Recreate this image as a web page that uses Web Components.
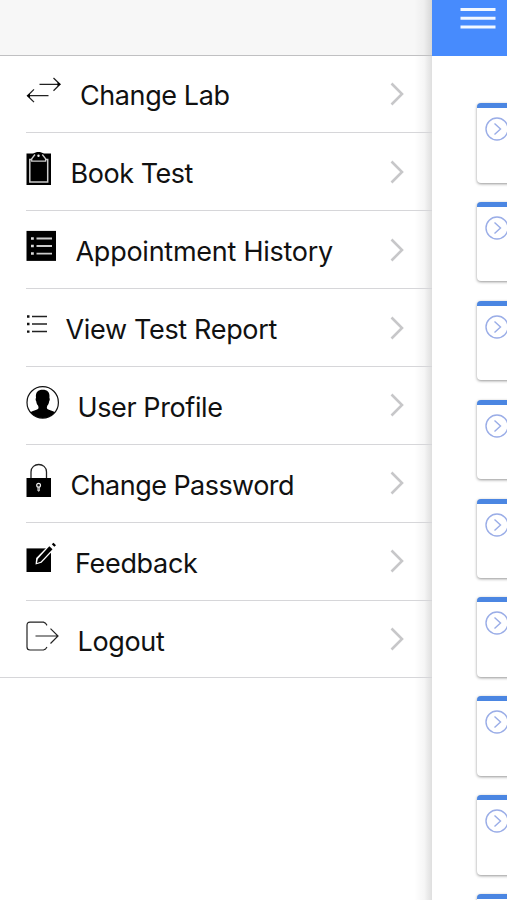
<!DOCTYPE html>
<html lang="en"><head><meta charset="utf-8"><title>Menu</title>
<style>html,body{margin:0;height:900px;overflow:hidden;background:#fff}</style></head>
<body><app-shell></app-shell>
<script>
const icons = {
  swap: [34, `<g fill="none" stroke="#222" stroke-width="1.3"><path d="M13.5 10.3H34M27.5 4l6.5 6.3-6.5 6.4M22.500 21.700H1.500M8 15.400l-6.500 6.300 6.500 6.400"/></g><path d="M31.500 8l3.300 2.300-3.300 2.300zM4 19.400l-3.300 2.300 3.300 2.300z"/>`],
  clipboard: [25, `<path d="M.5 1.500H7L11 0h3l4 1.500h7v31.500H.5z"/><path d="M5.500 7.500H3.800v22.500h17.900V7.500h-1.700" fill="none" stroke="#ccc" stroke-width="1.500"/><path d="M9 2.500L5.700 6.800v2.400h13.900V6.800L16.300 2.500" fill="none" stroke="#ccc" stroke-width="1.300"/><path d="M7 7.600c1-2.600 3-1.800 3.400-4.500.4-3.900 3.900-3.900 4.300 0 .4 2.700 2.400 1.900 3.400 4.500z"/><circle cx="12.500" cy="3.700" r="1.200" fill="#eee"/>`],
  listbox: [30, `<path d="M.5.9H30v30H.5z"/><path d="M10.500 8.500H26M10.500 16H26M10.500 23.600H26" stroke="#ccc" stroke-width="1.800"/><path d="M5 8.500h2.800M5 16h2.800M5 23.600h2.800" stroke="#ddd" stroke-width="2.500"/>`],
  list: [21, `<path d="M6 8.500h15M6 16h15M6 23.600h15" stroke="#222" stroke-width="1.500"/><path d="M1 8.500h2.500M1 16h2.500M1 23.600h2.500" stroke="#111" stroke-width="2.300"/>`],
  user: [32, `<circle cx="16.700" cy="16.400" r="15.700" fill="#fff" stroke="#111" stroke-width="1.200"/><path d="M4.500 26.300c2-1.600 6-1.800 7.500-3.200.9-.9.500-2.300 0-3.500-1-1.300-1.500-2.600-1.700-4.200-.8-1-.9-2.600-.3-3.700-.7-5.400 2-7.900 6.700-7.900s7.400 2.500 6.700 7.900c.6 1.100.5 2.700-.3 3.700-.2 1.600-.7 2.900-1.700 4.200-.5 1.200-.9 2.600 0 3.500 1.500 1.400 5.500 1.600 7.500 3.200A15.700 15.700 0 0 1 4.500 26.300z"/>`],
  lock: [25, `<path d="M5 15V8c0-10 15.500-10 15.500 0v7" fill="none" stroke="#222" stroke-width="1.300"/><path d="M.5 14H25v19H.5z"/><path d="M12 23v4h1.200v-4" fill="none" stroke="#eee" stroke-width="1"/><circle cx="12.600" cy="21.300" r="1.900" fill="#111" stroke="#eee" stroke-width="1.200"/>`],
  edit: [30, `<path d="M.5 6.400H25V30H.5z"/><path d="M9.500 22.500l.7-6.500L23.500 2.500l5 4.500L15.500 20.800z" fill="#fff"/><path d="M11 20.900l.8-3.900L23.300 4.300l3.200 3-11.800 12.500z"/><path d="M25.800 2.200L27.500.8 30 3.200l-1.700 1.600z"/>`],
  logout: [32, `<path d="M21 5.300l-1.500-2.100-2-1H4Q1 2.200 1 5.200V27q0 3 3 3h13.500l2-1 1.500-2M9.500 16H32M24.500 8.600L32 16l-7.500 7.500" fill="none" stroke="#222" stroke-width="1.200"/>`]
};
function define(name, html, setup) {
  customElements.define(name, class extends HTMLElement {
    connectedCallback() {
      if (this.shadowRoot) return;
      this.attachShadow({mode:'open'}).innerHTML = typeof html === 'function' ? html(this) : html;
      if (setup) setup(this, this.shadowRoot);
    }
  });
}
define('menu-icon', el => {
  const [w, art] = icons[el.getAttribute('name')];
  return `<style>:host{display:block;flex:none;height:40px}svg{display:block;overflow:visible;fill:#000}</style><svg width="${w}" height="40" viewBox="0 0 ${w} 40">${art}</svg>`;
});
define('menu-row', el => `<style>
:host{display:flex;box-sizing:border-box;height:77.88px;padding-left:26px}
:host(:last-child){padding-left:0}:host(:last-child) .line{padding-left:26px}
.line{display:flex;flex:1;min-width:0;box-sizing:border-box;align-items:flex-start;padding-top:19px;border-bottom:1px solid #d6d6d9}
.label{flex:1;margin-left:${el.getAttribute('gap')}px;margin-top:1px;line-height:42px;white-space:nowrap}
.chevron{display:block;margin:6.5px 27px 0 0;flex:none}
</style><div class="line"><menu-icon name="${el.getAttribute('icon')}"></menu-icon><div class="label"><span><slot></slot></span></div><svg class="chevron" width="16" height="26" viewBox="0 0 16 26"><path d="M2.500 2.500l10.500 10.500-10.500 10.500" fill="none" stroke="#c7c7c9" stroke-width="2.600"/></svg></div>`,
(el, root) => {
  // Track the label so that it spans its set measure.
  const span = root.querySelector('.label span');
  const extra = Number(el.getAttribute('measure')) - span.getBoundingClientRect().width;
  span.style.letterSpacing = extra / el.textContent.length + 'px';
});
define('side-menu', `<style>
:host{display:block;width:432px;height:900px;flex:none;background:linear-gradient(to right,transparent 414px,rgba(0,0,0,.035) 424px,rgba(0,0,0,.13) 432px),linear-gradient(#f7f7f7 55px,#fff 55px)}
header{height:56px;box-sizing:border-box;border-bottom:1px solid #c0c0c2}
nav{display:flex;flex-direction:column;margin-top:-.6px;font:27px Inter,"Liberation Sans",sans-serif;color:#111}
</style><header></header><nav>
<menu-row icon="swap" gap="20" measure="149.5">Change Lab</menu-row>
<menu-row icon="clipboard" gap="19.5" measure="122.5">Book Test</menu-row>
<menu-row icon="listbox" gap="19.5" measure="257.5">Appointment History</menu-row>
<menu-row icon="list" gap="18.500" measure="211.5">View Test Report</menu-row>
<menu-row icon="user" gap="19.5" measure="145">User Profile</menu-row>
<menu-row icon="lock" gap="19.5" measure="223.5">Change Password</menu-row>
<menu-row icon="edit" gap="19" measure="122.5">Feedback</menu-row>
<menu-row icon="logout" gap="19.5" measure="87">Logout</menu-row></nav>`);
define('content-card', `<style>
:host{display:block;box-sizing:border-box;flex:none;width:120px;height:79.500px;padding:9px 0 0 8px;border-top:5px solid #4b86e2;border-radius:4px;background:#fff;box-shadow:0 1px 3px rgba(0,0,0,.42)}
svg{display:block}</style><svg width="24" height="24" viewBox="0 0 24 24" fill="none" stroke="#9aade7" stroke-width="1.400"><circle cx="12" cy="12" r="11"/><path d="M9.500 6.500L15.500 12l-6 5.500"/></svg>`);
define('main-page', `<style>
:host{display:block;flex:1;min-width:0;height:900px;overflow:hidden;background:#fff}
header{height:56px;background:#478bfd;box-sizing:border-box;padding:7px 0 0 28px}
header svg{display:block}
main{display:flex;flex-direction:column;gap:19.380px;padding:47px 0 0 45px}
</style><header><svg width="36" height="24" viewBox="0 0 36 24"><path d="M.5 2.500h35M.5 11.300h35M.5 20h35" stroke="#f2f8ff" stroke-width="2.900"/></svg></header><main>${'<content-card></content-card>'.repeat(9)}</main>`);
define('app-shell', `<style>:host{display:flex;width:507px;height:900px;overflow:hidden}</style><side-menu></side-menu><main-page></main-page>`);
</script></body></html>
